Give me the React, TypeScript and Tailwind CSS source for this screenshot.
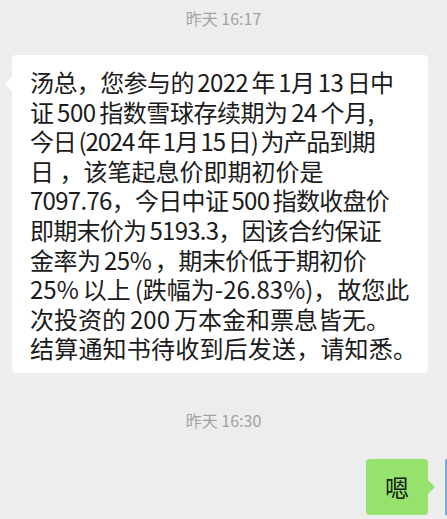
import React from "react";

const G = "\u2006";

const lines: { t: string; cls: string }[] = [
  { t: `汤总，您参与的${G}2022${G}年${G}1月${G}13${G}日中`, cls: "tracking-[-0.6px]" },
  { t: `证${G}500${G}指数雪球存续期为${G}24${G}个月,`, cls: "tracking-[-0.45px]" },
  { t: `今日${G}(2024${G}年${G}1月${G}15${G}日)${G}为产品到期`, cls: "tracking-[-1.15px]" },
  { t: `日 ，该笔起息价即期初价是`, cls: "tracking-[0px]" },
  { t: `7097.76，今日中证${G}500${G}指数收盘价`, cls: "tracking-[-0.7px]" },
  { t: `即期末价为${G}5193.3，因该合约保证`, cls: "tracking-[-0.75px]" },
  { t: `金率为${G}25%${G}，期末价低于期初价`, cls: "tracking-[-0.5px]" },
  { t: `25%${G}以上${G}(跌幅为-26.83%)，故您此`, cls: "tracking-[0px]" },
  { t: `次投资的${G}200${G}万本金和票息皆无。`, cls: "tracking-[0px]" },
  { t: `结算通知书待收到后发送，请知悉。`, cls: "tracking-[0.2px]" },
];

export default function App() {
  const font = { fontFamily: '"Noto Sans CJK SC", "Noto Sans", sans-serif' };
  return (
    <div
      className="w-[447px] h-[519px] bg-[#ededed] overflow-hidden flex flex-col"
      style={font}
    >
      <div className="pt-[7px] h-[30px] text-center text-[16px] leading-[22px] text-[#a3a3a3]">
        昨天 16:17
      </div>
      <div className="mt-[25px] ml-[12px] w-[416px] relative">
        <div className="absolute left-[-7px] top-[22px] w-0 h-0 border-y-[7px] border-y-transparent border-r-[7px] border-r-white" />
        <div className="bg-white rounded-[4px] pl-[18px] pr-[10px] pt-[12px] pb-[10px] text-[24px] leading-[29.6px] text-[#1b1b1b]">
          {lines.map((l, i) => (
            <div key={i} className={`whitespace-pre ${l.cls}`}>
              {l.t}
            </div>
          ))}
        </div>
      </div>
      <div className="mt-[37px] h-[20px] text-center text-[16px] leading-[20px] text-[#a3a3a3]">
        昨天 16:30
      </div>
      <div className="mt-[29px] flex justify-end">
        <div className="relative mr-[17px]">
          <div className="w-[62px] h-[56px] bg-[#95e36d] rounded-[4px] flex items-center justify-center text-[24px] text-[#152010]">
            嗯
          </div>
          <div className="absolute right-[-7px] top-[21px] w-0 h-0 border-y-[7px] border-y-transparent border-l-[7px] border-l-[#95e36d]" />
        </div>
        <div className="w-[2px] h-[56px] bg-[#7fa6d6]" />
      </div>
    </div>
  );
}
